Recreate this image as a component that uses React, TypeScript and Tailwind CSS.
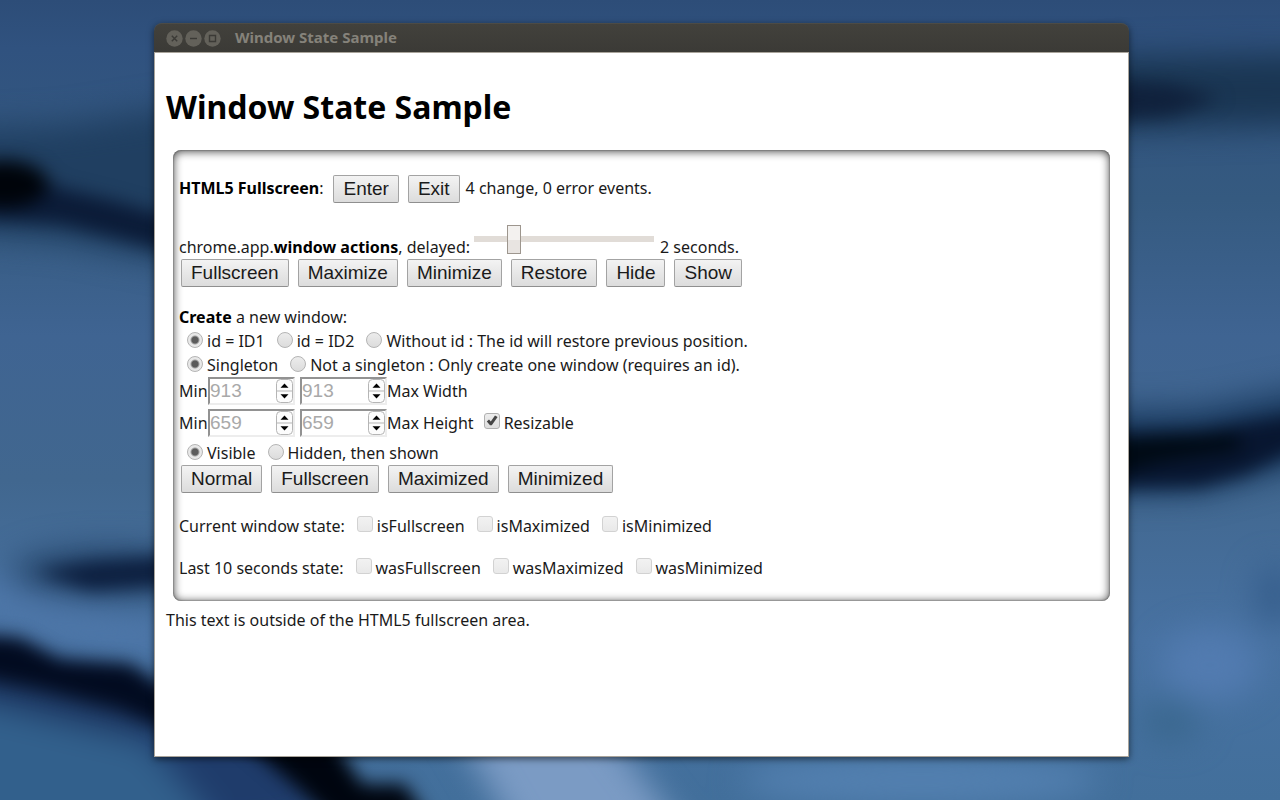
import { useId, useState, type ReactNode } from "react";

function Wallpaper() {
  return (
    <svg
      aria-hidden="true"
      className="absolute inset-0 h-full w-full"
      viewBox="0 0 1280 800"
      preserveAspectRatio="none"
    >
      <defs>
        <linearGradient id="sky" x1="0" y1="0" x2="0" y2="1">
          <stop offset="0" stopColor="#2d4d78" />
          <stop offset="0.06" stopColor="#30527f" />
          <stop offset="0.25" stopColor="#355a80" />
          <stop offset="0.42" stopColor="#3f6492" />
          <stop offset="0.6" stopColor="#41678f" />
          <stop offset="0.8" stopColor="#4872a2" />
          <stop offset="1" stopColor="#426f9b" />
        </linearGradient>
        <filter id="soft" x="-40%" y="-80%" width="180%" height="260%" colorInterpolationFilters="sRGB">
          <feGaussianBlur stdDeviation="16" />
        </filter>
        <filter id="mid" x="-40%" y="-80%" width="180%" height="260%" colorInterpolationFilters="sRGB">
          <feGaussianBlur stdDeviation="9" />
        </filter>
      </defs>
      <rect width="1280" height="800" fill="url(#sky)" />
      <g filter="url(#soft)">
        <path d="M-60 130 L60 125 L190 105 L190 265 L60 240 L-60 230Z" fill="#203f61" />
        <path d="M1100 56 L1340 52 L1340 124 L1100 130Z" fill="#1a3653" />
        <path d="M1100 412 L1200 409 L1340 382 L1340 455 L1200 492 L1100 494Z" fill="#1b3b60" />
        <ellipse cx="110" cy="572" rx="100" ry="24" fill="#27476c" />
        <path d="M-60 690 L50 690 L170 730 L280 770 L200 850 L-60 850Z" fill="#32608c" />
        <path d="M-60 645 L170 695 L170 745 L-60 690Z" fill="#1b345e" />
        <path d="M130 720 L300 730 L340 820 L230 840Z" fill="#1f3c6b" />
        <path d="M450 720 L600 720 L690 840 L520 840Z" fill="#7b9bc4" />
        <path d="M-30 570 L60 600 L180 630 L180 655 L60 640 L-30 615Z" fill="#4e77a9" />
        <ellipse cx="1210" cy="665" rx="50" ry="36" fill="#527bb0" />
        <ellipse cx="1170" cy="722" rx="30" ry="20" fill="#3a678e" />
        <ellipse cx="1275" cy="595" rx="20" ry="30" fill="#365e8c" />
        <ellipse cx="920" cy="780" rx="180" ry="26" fill="#5380b0" />
      </g>
      <g filter="url(#mid)">
        <path d="M-40 163 L20 163 L60 188 L110 200 L180 220 L180 254 L110 236 L60 224 L-40 218Z" fill="#0b1b37" />
        <ellipse cx="4" cy="184" rx="44" ry="24" fill="#00040a" />
        <path d="M1110 80 L1170 84 L1220 98 L1170 116 L1110 120Z" fill="#10213c" />
        <path d="M1100 434 L1200 430 L1320 410 L1320 438 L1245 474 L1200 486 L1100 488Z" fill="#081630" />
        <path d="M1100 440 L1160 436 L1240 434 L1240 450 L1160 462 L1100 480Z" fill="#000a14" />
        <path d="M35 572 L90 562 L180 556 L180 584 L90 590Z" fill="#0c1e3e" />
        <path d="M-40 634 L20 638 L60 660 L130 664 L180 700 L180 736 L120 710 L40 690 L-40 674Z" fill="#020b20" />
        <path d="M230 730 L330 735 L362 784 L405 784 L440 840 L350 840 L300 790Z" fill="#00050f" />
      </g>
    </svg>
  );
}

function PushButton({ children }: { children: ReactNode }) {
  return (
    <button
      type="button"
      className="h-7 rounded-xs border border-[#a3a3a3] border-b-[#8f8f8f] bg-linear-to-b from-[#f3f3f3] to-[#dcdcdc] px-[9px] font-['Liberation_Sans',Arial,sans-serif] text-[19px] leading-6 text-[#1a1a1a]"
    >
      {children}
    </button>
  );
}

function Radio({ name, label, defaultChecked }: { name: string; label: string; defaultChecked?: boolean }) {
  return (
    <label className="flex items-center gap-1 whitespace-pre">
      <input
        type="radio"
        name={name}
        defaultChecked={defaultChecked}
        className="mb-[2px] size-4 shrink-0 appearance-none rounded-full border border-[#b4b4b4] bg-linear-to-b from-[#ececec] to-[#dcdcdc] checked:bg-[radial-gradient(circle,#5c5c5c_0_3px,#e8e8e8_5px)]"
      />
      {label}
    </label>
  );
}

function Check({ label, disabled, checked = false }: { label: string; disabled?: boolean; checked?: boolean }) {
  const [on, setOn] = useState(checked);
  return (
    <label className="flex items-center gap-1">
      <span className="relative mb-1 flex size-4 shrink-0">
        <input
          type="checkbox"
          disabled={disabled}
          checked={on}
          onChange={(e) => setOn(e.target.checked)}
          className="size-4 appearance-none rounded-[3px] border border-[#b0b0b0] bg-linear-to-b from-[#ededed] to-[#dedede] disabled:border-[#d2d2d2] disabled:from-[#f2f2f2] disabled:to-[#e9e9e9]"
        />
        {on && (
          <svg viewBox="0 0 16 16" className="pointer-events-none absolute inset-0 size-4" aria-hidden="true">
            <path d="M2.800 8.400 L5 6.600 L6.800 8.400 L11 2.600 L13.600 4 L7.800 12.200 L6 12.200Z" fill="#454545" />
          </svg>
        )}
      </span>
      {label}
    </label>
  );
}

function NumberBox({ id, value }: { id: string; value: number }) {
  return (
    <span className="flex h-7 w-[87px] items-center border-2 border-t-[#929292] border-r-[#ededed] border-b-[#ededed] border-l-[#929292] bg-white">
      <input
        id={id}
        type="number"
        disabled
        value={value}
        readOnly
        className="min-w-0 flex-1 appearance-none bg-transparent font-['Liberation_Sans',Arial,sans-serif] text-[19px] leading-6 text-[#a9a9a9] [appearance:textfield]"
      />
      <svg viewBox="0 0 17 24" className="h-6 w-[17px] shrink-0" aria-hidden="true">
        <rect x="0.5" y="0.5" width="16" height="23" rx="4" fill="#fcfcfc" stroke="#b5b5b5" />
        <path d="M1 12H16" stroke="#b5b5b5" />
        <path d="M8.500 4.500L12.500 8.800H4.500Z M8.500 19.500L12.500 15.200H4.500Z" fill="#000" />
      </svg>
    </span>
  );
}

function SizeRow({ value, label, children }: { value: number; label: string; children?: ReactNode }) {
  const min = useId();
  const max = useId();
  return (
    <div className="flex h-8 items-start leading-7">
      <label htmlFor={min} className="w-[29px]">Min</label>
      <NumberBox id={min} value={value} />
      <span className="w-[5px]" />
      <NumberBox id={max} value={value} />
      <label htmlFor={max}>{label}</label>
      {children}
    </div>
  );
}

function TitleBar() {
  const icons = [
    { name: "Close", d: "M5.800 5.800L11.200 11.200M11.200 5.800L5.800 11.200" },
    { name: "Minimize", d: "M5 8.500H12" },
    { name: "Maximize", d: "M5.500 5.500H11.500V11.500H5.500Z" },
  ];
  return (
    <header className="flex h-[29px] items-center rounded-t-lg border-t border-[#4c4b46] bg-linear-to-b from-[#42413c] to-[#3b3a36] pl-3">
      <div className="flex gap-[2px]">
        {icons.map((icon) => (
          <button key={icon.name} type="button" aria-label={icon.name} className="size-[17px]">
            <svg viewBox="0 0 17 17" className="size-[17px]" aria-hidden="true">
              <circle cx="8.500" cy="8.500" r="8.200" fill="#63615a" />
              <path d={icon.d} fill="none" stroke="#3b3a36" strokeWidth="1.400" />
            </svg>
          </button>
        ))}
      </div>
      <span className="ml-[14px] pb-[2px] text-[15px] leading-5 font-bold text-[#85827a]">Window State Sample</span>
    </header>
  );
}

export default function App() {
  const [delay, setDelay] = useState(2);
  return (
    <div className="relative flex min-h-screen flex-col overflow-hidden bg-[#41658f] pt-[23px] pr-[151px] pb-[43px] pl-[154px] font-['Noto_Sans','Open_Sans',sans-serif] text-base leading-6 text-[#1a1a1a]">
      <Wallpaper />
      <div className="relative flex flex-1 flex-col rounded-t-lg shadow-[0_2px_7px_rgba(0,0,0,0.55)]">
        <TitleBar />
        <main className="flex-1 border border-[#a9a49b] bg-white pr-[18px] pl-[11px]">
          <h1 className="pt-8 text-[32px] leading-11 font-bold text-black">Window State Sample</h1>
          <section className="mt-[21px] ml-[7px] rounded-lg pt-[25px] pr-2 pb-[21px] pl-[6px] shadow-[inset_0_1px_8px_1px_rgba(0,0,0,0.65),inset_0_0_2px_rgba(0,0,0,0.6)]">
            <div className="flex h-7 items-center">
              <span className="mr-[10px] pb-[2px]"><b className="text-black">HTML5 Fullscreen</b>:</span>
              <div className="flex gap-[9px]">
                <PushButton>Enter</PushButton>
                <PushButton>Exit</PushButton>
              </div>
              <span className="ml-[6px] pb-[2px]">4 change, 0 error events.</span>
            </div>
            <div className="mt-5 flex h-9 items-end">
              <label htmlFor="delay" className="mr-1">
                chrome.app.<b className="text-black">window actions</b>, delayed:
              </label>
              <input
                id="delay"
                type="range"
                min={0}
                max={10}
                value={delay}
                onChange={(e) => setDelay(Number(e.target.value))}
                className="mb-[6px] h-[29px] w-[180px] appearance-none bg-transparent [&::-webkit-slider-runnable-track]:h-[6px] [&::-webkit-slider-runnable-track]:bg-[#e1dcd7] [&::-webkit-slider-thumb]:-mt-[11px] [&::-webkit-slider-thumb]:h-[29px] [&::-webkit-slider-thumb]:w-[14px] [&::-webkit-slider-thumb]:appearance-none [&::-webkit-slider-thumb]:border [&::-webkit-slider-thumb]:border-[#9d968e] [&::-webkit-slider-thumb]:bg-[linear-gradient(#f3f1ef_50%,#e8e4e1_50%)]"
              />
              <span className="ml-[6px]">{delay} seconds.</span>
            </div>
            <div className="ml-[2px] flex gap-[9px]">
              <PushButton>Fullscreen</PushButton>
              <PushButton>Maximize</PushButton>
              <PushButton>Minimize</PushButton>
              <PushButton>Restore</PushButton>
              <PushButton>Hide</PushButton>
              <PushButton>Show</PushButton>
            </div>
            <p className="mt-[18px]"><b className="text-black">Create</b> a new window:</p>
            <div className="ml-2 flex h-6 items-center gap-3">
              <Radio name="window-id" label="id = ID1" defaultChecked />
              <Radio name="window-id" label="id = ID2" />
              <Radio name="window-id" label="Without id : The id will restore previous position." />
            </div>
            <div className="ml-2 flex h-6 items-center gap-3">
              <Radio name="singleton" label="Singleton" defaultChecked />
              <Radio name="singleton" label="Not a singleton : Only create one window (requires an id)." />
            </div>
            <SizeRow value={913} label="Max Width" />
            <SizeRow value={659} label="Max Height">
              <div className="ml-[10px]"><Check label="Resizable" checked /></div>
            </SizeRow>
            <div className="ml-2 flex h-6 items-center gap-3">
              <Radio name="visibility" label="Visible" defaultChecked />
              <Radio name="visibility" label="Hidden, then shown" />
            </div>
            <div className="ml-[2px] flex gap-[9px]">
              <PushButton>Normal</PushButton>
              <PushButton>Fullscreen</PushButton>
              <PushButton>Maximized</PushButton>
              <PushButton>Minimized</PushButton>
            </div>
            <div className="mt-[21px] flex items-center gap-3">
              <span>Current window state:</span>
              <Check label="isFullscreen" disabled />
              <Check label="isMaximized" disabled />
              <Check label="isMinimized" disabled />
            </div>
            <div className="mt-[18px] flex items-center gap-3">
              <span>Last 10 seconds state:</span>
              <Check label="wasFullscreen" disabled />
              <Check label="wasMaximized" disabled />
              <Check label="wasMinimized" disabled />
            </div>
          </section>
          <p className="mt-[7px]">This text is outside of the HTML5 fullscreen area.</p>
        </main>
      </div>
    </div>
  );
}
